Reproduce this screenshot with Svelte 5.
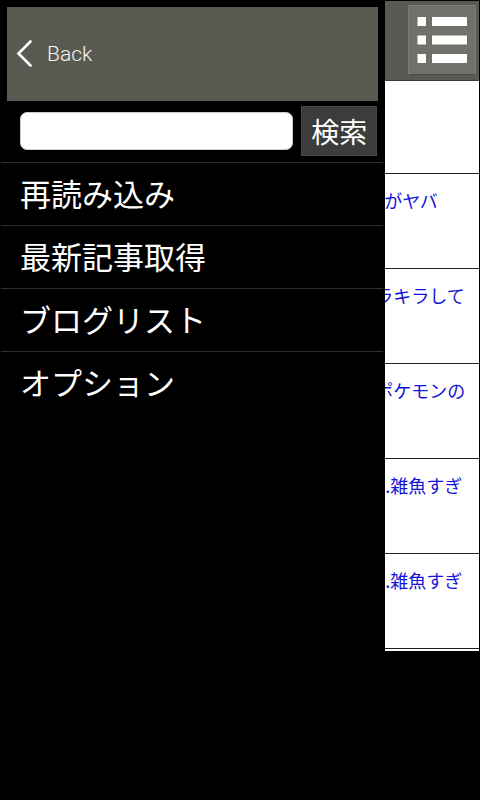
<script lang="ts">
  interface Entry {
    title: string;
  }

  const menu: string[] = ['再読み込み', '最新記事取得', 'ブログリスト', 'オプション'];

  // Tails of the article titles that stay visible beside the open drawer
  const entries: Entry[] = [
    { title: '' },
    { title: '\u2002がヤバ' },
    { title: 'ラキラして' },
    { title: 'ポケモンの' },
    { title: '...雑魚すぎ' },
    { title: '...雑魚すぎ' }
  ];

  let query = $state('');
</script>

<div class="shell">
  <aside class="drawer">
    <button type="button" class="back">
      <svg width="18" height="30" viewBox="0 0 18 30" fill="none" stroke="#fff" stroke-width="2.6" stroke-linecap="round" stroke-linejoin="miter" aria-hidden="true">
        <polyline points="15.5 2.5 3.5 14.5 15.5 26.5"></polyline>
      </svg>
      <span>Back</span>
    </button>

    <form class="search" onsubmit={(e) => e.preventDefault()}>
      <input type="text" aria-label="検索" bind:value={query} />
      <button type="submit">検索</button>
    </form>

    <nav>
      <ul>
        {#each menu as item}
          <li><button type="button">{item}</button></li>
        {/each}
      </ul>
    </nav>
  </aside>

  <main class="page">
    <header>
      <button type="button" class="menu-btn" aria-label="メニュー">
        <svg width="50" height="48" viewBox="0 0 50 48" fill="#fff" aria-hidden="true">
          {#each [1, 19.5, 38] as y}
            <rect x="0.5" {y} width="8.5" height="9"></rect>
            <rect x="15" {y} width="35" height="9"></rect>
          {/each}
        </svg>
      </button>
    </header>

    <ul class="entries">
      {#each entries as entry}
        <li>
          {#if entry.title}
            <a href="#entry">{entry.title}</a>
          {/if}
        </li>
      {/each}
    </ul>
  </main>
</div>

<style>
  :global(body) {
    background: #000;
  }

  .shell {
    display: flex;
    align-items: flex-start;
    min-height: 100vh;
    padding-right: 1px;
    box-sizing: border-box;
    overflow: hidden;
    background: #000;
    color: #fff;
    font-family: "Noto Sans CJK JP", sans-serif;
  }

  button {
    margin: 0;
    padding: 0;
    border: 0;
    color: inherit;
    font-family: inherit;
    cursor: pointer;
  }

  ul {
    margin: 0;
    padding: 0;
    list-style: none;
  }

  .drawer {
    flex: 0 0 80%;
    min-width: 0;
    box-sizing: border-box;
    padding-top: 7px;
  }

  .back {
    display: flex;
    align-items: center;
    gap: 14px;
    width: calc(100% - 12px);
    height: 94px;
    margin-left: 7px;
    padding-left: 8px;
    background: #595a52;
    color: #f4f4f0;
    font-family: Roboto, sans-serif;
    font-size: 21px;
    font-weight: 300;
  }

  .search {
    display: flex;
    align-items: center;
    gap: 8px;
    padding: 5px 6px 6px 20px;
  }

  .search input {
    flex: 1;
    min-width: 0;
    height: 38px;
    box-sizing: border-box;
    padding: 0 8px;
    border: 1px solid #ccc;
    border-radius: 7px;
    background: #fff;
    font-size: 20px;
  }

  .search button {
    width: 76px;
    height: 50px;
    border: 1px solid #484848;
    background: #3c3c3c;
    font-size: 28px;
    line-height: 48px;
  }

  nav li {
    margin-left: 1px;
    border-top: 1px solid #2c2c2c;
  }

  nav button {
    display: block;
    width: 100%;
    padding: 0 19px 2px;
    background: none;
    font-size: 31px;
    line-height: 60px;
    text-align: left;
  }

  .page {
    flex: 1;
    min-width: 0;
    margin: 1px 0 0 2px;
    padding-bottom: 2px;
    overflow: hidden;
    background: #fff;
  }

  header {
    display: flex;
    justify-content: flex-end;
    padding: 4px 3px 5px;
    border-bottom: 1px solid #3c3c36;
    background: #595a52;
  }

  .menu-btn {
    display: flex;
    align-items: center;
    justify-content: center;
    width: 68px;
    height: 70px;
    border: 1px solid #7c7d77;
    border-bottom-color: #4c4d47;
    background: #70716b;
  }

  .entries li {
    height: 95px;
    padding-top: 13px;
    box-sizing: border-box;
    border-bottom: 1px solid #222;
    white-space: nowrap;
  }

  .entries li:first-child {
    height: 93px;
  }

  .entries a {
    display: block;
    margin-left: -10px;
    color: #1414d8;
    font-size: 18px;
    line-height: 26px;
    text-decoration: none;
  }
</style>
